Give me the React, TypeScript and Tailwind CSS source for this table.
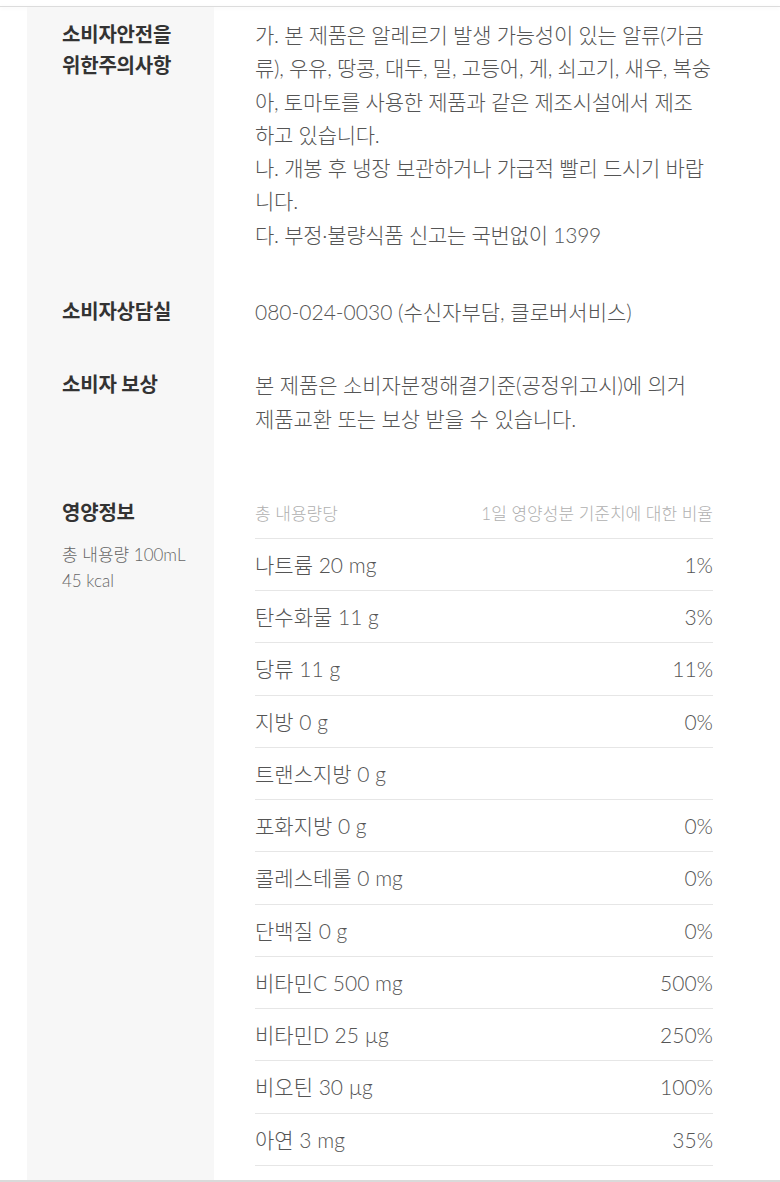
import React from "react";

const font = { fontFamily: 'Lato, "Noto Sans CJK KR", sans-serif' };

const nutrients: [string, string][] = [
  ["나트륨 20 mg", "1%"],
  ["탄수화물 11 g", "3%"],
  ["당류 11 g", "11%"],
  ["지방 0 g", "0%"],
  ["트랜스지방 0 g", ""],
  ["포화지방 0 g", "0%"],
  ["콜레스테롤 0 mg", "0%"],
  ["단백질 0 g", "0%"],
  ["비타민C 500 mg", "500%"],
  ["비타민D 25 µg", "250%"],
  ["비오틴 30 µg", "100%"],
  ["아연 3 mg", "35%"],
];

const caution = [
  "가. 본 제품은 알레르기 발생 가능성이 있는 알류(가금",
  "류), 우유, 땅콩, 대두, 밀, 고등어, 게, 쇠고기, 새우, 복숭",
  "아, 토마토를 사용한 제품과 같은 제조시설에서 제조",
  "하고 있습니다.",
  "나. 개봉 후 냉장 보관하거나 가급적 빨리 드시기 바랍",
  "니다.",
  "다. 부정·불량식품 신고는 국번없이 1399",
];

function Label({ children }: { children: React.ReactNode }) {
  return <div className="text-[20px] leading-[31px] font-bold text-[#333] tracking-[-0.2px]">{children}</div>;
}

function Row({
  pt,
  label,
  children,
  grow,
}: {
  pt: string;
  label: React.ReactNode;
  children: React.ReactNode;
  grow?: boolean;
}) {
  return (
    <div className={`flex ${grow ? "flex-1" : ""}`}>
      <div className={`w-[187px] shrink-0 bg-[#f7f7f7] pl-[35px] ${pt}`}>{label}</div>
      <div className={`flex-1 pl-[41px] pr-[40px] ${pt}`}>{children}</div>
    </div>
  );
}

export default function App() {
  return (
    <div className="w-[780px] h-[1182px] bg-white flex flex-col overflow-hidden" style={font}>
      <div className="h-[6px] shrink-0" />
      <div className="h-px bg-[#dcdcdc] shadow-[0_1px_4px_rgba(0,0,0,0.08)] shrink-0" />
      <div className="flex-1 flex flex-col px-[27px] text-[#555] text-[21px] leading-[33.3px] font-light">
        <Row
          pt="pt-[11px]"
          label={
            <div className="mt-[1px]">
              <Label>
                소비자안전을
                <br />
                위한주의사항
              </Label>
            </div>
          }
        >
          <div className="tracking-[-0.25px]">
            {caution.map((line) => (
              <div key={line} className="whitespace-nowrap">
                {line}
              </div>
            ))}
          </div>
        </Row>

        <Row
          pt="pt-[44px]"
          label={
            <div className="mt-[1px]">
              <Label>소비자상담실</Label>
            </div>
          }
        >
          080-024-0030 (수신자부담, 클로버서비스)
        </Row>

        <Row
          pt="pt-[40px]"
          label={
            <div className="mt-[1px]">
              <Label>소비자 보상</Label>
            </div>
          }
        >
          <div className="whitespace-nowrap tracking-[-0.1px]">본 제품은 소비자분쟁해결기준(공정위고시)에 의거</div>
          <div className="whitespace-nowrap tracking-[-0.1px]">제품교환 또는 보상 받을 수 있습니다.</div>
        </Row>

        <Row
          pt="pt-[52px]"
          grow
          label={
            <div className="mt-[10px]">
              <Label>영양정보</Label>
              <div className="mt-[14px] text-[17px] leading-[26px] text-[#666]">
                총 내용량 100mL
                <br />
                45 kcal
              </div>
            </div>
          }
        >
          <div className="h-[51px] flex items-center justify-between text-[17px] text-[#b0b0b0] pt-[2px]">
            <span>총 내용량당</span>
            <span>1일 영양성분 기준치에 대한 비율</span>
          </div>
          {nutrients.map(([name, pct]) => (
            <div
              key={name}
              className="h-[52.25px] border-t border-[#e6e6e6] flex items-center justify-between"
            >
              <span>{name}</span>
              <span>{pct}</span>
            </div>
          ))}
          <div className="border-t border-[#e6e6e6]" />
        </Row>
      </div>
      <div className="h-[2px] bg-[#dadada] shrink-0" />
    </div>
  );
}
